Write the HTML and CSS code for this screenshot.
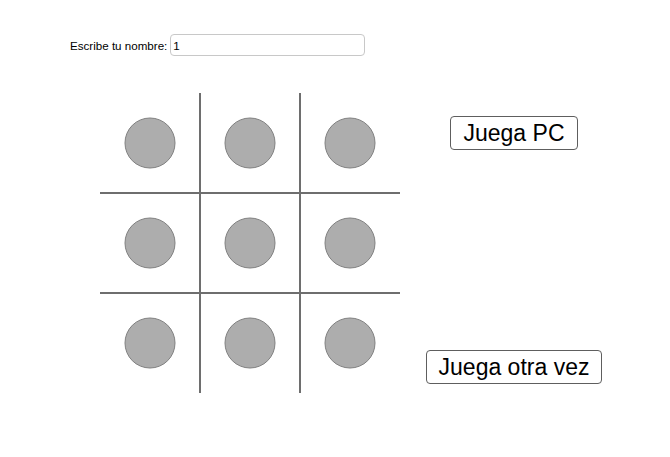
FILE: index.html
```html
<!DOCTYPE html>
<html lang="es">
<head>
<meta charset="utf-8">
<title>Tres en raya</title>
<link rel="stylesheet" href="styles.css">
</head>
<body>
<div class="app">
  <div class="name-row">
    <label class="name-label" for="nombre">Escribe tu nombre:</label>
    <input class="name-input" id="nombre" type="text" value="1">
  </div>
  <div class="play-area">
    <svg class="board" width="302" height="302" viewBox="0 0 302 302" xmlns="http://www.w3.org/2000/svg">
      <g stroke="#6e6e6e" stroke-width="2">
        <line x1="101" y1="1" x2="101" y2="301"/>
        <line x1="201" y1="1" x2="201" y2="301"/>
        <line x1="1" y1="101" x2="301" y2="101"/>
        <line x1="1" y1="201" x2="301" y2="201"/>
      </g>
      <g fill="#adadad" stroke="#808080" stroke-width="1">
        <circle cx="51" cy="51" r="25"/>
        <circle cx="151" cy="51" r="25"/>
        <circle cx="251" cy="51" r="25"/>
        <circle cx="51" cy="151" r="25"/>
        <circle cx="151" cy="151" r="25"/>
        <circle cx="251" cy="151" r="25"/>
        <circle cx="51" cy="251" r="25"/>
        <circle cx="151" cy="251" r="25"/>
        <circle cx="251" cy="251" r="25"/>
      </g>
    </svg>
    <div class="actions">
      <button class="btn" type="button">Juega PC</button>
      <button class="btn" type="button">Juega otra vez</button>
    </div>
  </div>
</div>
</body>
</html>
```
FILE: styles.css
```css
html, body {
  margin: 0;
  padding: 0;
  background: #ffffff;
}
.app {
  width: 670px;
  height: 457px;
  font-family: "Liberation Sans", Arial, sans-serif;
  color: #000;
  overflow: hidden;
}
.name-row {
  display: flex;
  align-items: center;
  padding: 34px 0 0 70px;
  height: 22px;
}
.name-label {
  font-size: 11.6px;
  margin-right: 3px;
}
.name-input {
  box-sizing: border-box;
  width: 195px;
  height: 22px;
  margin: 0;
  padding: 0 0 0 2px;
  border: 1px solid #c8c8c8;
  border-radius: 4px;
  font-family: "Liberation Sans", Arial, sans-serif;
  font-size: 11.6px;
  color: #000;
  outline: none;
}
.play-area {
  display: flex;
  margin-top: 36px;
  padding-left: 99px;
}
.board {
  display: block;
  flex: none;
}
.actions {
  width: 226px;
  display: flex;
  flex-direction: column;
  align-items: center;
  padding-top: 24px;
  gap: 200px;
}
.btn {
  box-sizing: border-box;
  height: 34px;
  margin: 0;
  padding: 0 12px;
  background: #fff;
  border: 1px solid #5e5e5e;
  border-radius: 4px;
  font-family: "Liberation Sans", Arial, sans-serif;
  font-size: 23px;
  color: #000;
  line-height: 32px;
  cursor: pointer;
}
```
